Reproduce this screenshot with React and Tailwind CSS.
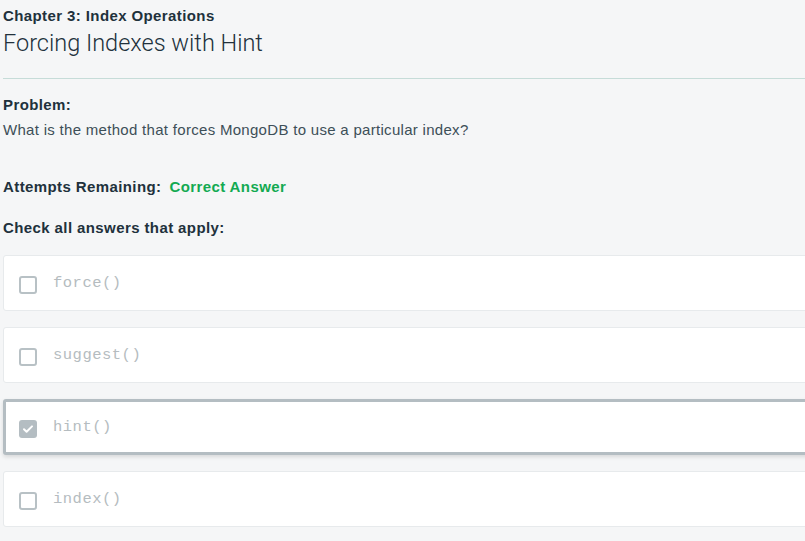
import React from "react";

const answers = [
  { label: "force()", checked: false },
  { label: "suggest()", checked: false },
  { label: "hint()", checked: true },
  { label: "index()", checked: false },
];

const Checkbox = ({ checked }) =>
  checked ? (
    <div className="w-[18px] h-[18px] rounded-[3px] bg-[#b4bdc2] flex items-center justify-center">
      <svg width="12" height="12" viewBox="0 0 12 12" fill="none">
        <path d="M2 6.3l2.6 2.5L10 3.4" stroke="#fff" strokeWidth="2" strokeLinecap="round" strokeLinejoin="round" />
      </svg>
    </div>
  ) : (
    <div className="w-[18px] h-[18px] rounded-[3px] border-2 border-[#b8c1c5] bg-white"></div>
  );

const App = () => {
  return (
    <div className="min-h-[541px] bg-[#f5f6f7] pl-[3px] text-[#21313c] overflow-hidden" style={{ fontFamily: "'Liberation Sans', Arial, sans-serif" }}>
      {/* Header */}
      <div className="pt-[7px] text-[15px] font-bold leading-[18px] tracking-[0.4px]">Chapter 3: Index Operations</div>
      <h1
        className="text-[23.5px] font-light leading-[32px] mt-[2px]"
        style={{ fontFamily: "Roboto, 'Liberation Sans', sans-serif" }}
      >
        Forcing Indexes with Hint
      </h1>
      <div className="mt-[19px] h-px bg-[#c6dcd8] w-[900px]"></div>

      {/* Problem */}
      <div className="mt-[17px] text-[15px] font-bold leading-[18px] tracking-[0.4px]">Problem:</div>
      <p className="mt-[6px] text-[15px] leading-[20px] tracking-[0.3px] text-[#3d4f58]">
        What is the method that forces MongoDB to use a particular index?
      </p>

      <div className="mt-[38px] flex items-center gap-[8px] text-[15px] font-bold leading-[18px] tracking-[0.4px]">
        <span>Attempts Remaining:</span>
        <span className="text-[#13aa52]">Correct Answer</span>
      </div>

      <div className="mt-[23px] text-[15px] font-bold leading-[18px] tracking-[0.4px]">Check all answers that apply:</div>

      {/* Answers */}
      <div className="mt-[18px] flex flex-col gap-[16px] w-[900px]">
        {answers.map((a) => (
          <div
            key={a.label}
            className={
              a.checked
                ? "h-[56px] bg-white rounded-[3px] border-[3px] border-[#b4bdc2] shadow-[0_2px_4px_rgba(0,0,0,0.12)] flex items-center pl-[13px] gap-[16px]"
                : "h-[56px] bg-white rounded-[3px] border border-[#e7eaec] flex items-center pl-[15px] gap-[16px]"
            }
          >
            <div className="mt-[4px]">
              <Checkbox checked={a.checked} />
            </div>
            <span
              className="mt-[2px] text-[15.5px] text-[#b5bcc0] tracking-[0.5px]"
              style={{ fontFamily: "'Liberation Mono', 'DejaVu Sans Mono', monospace" }}
            >
              {a.label}
            </span>
          </div>
        ))}
      </div>
    </div>
  );
};

export default App;
